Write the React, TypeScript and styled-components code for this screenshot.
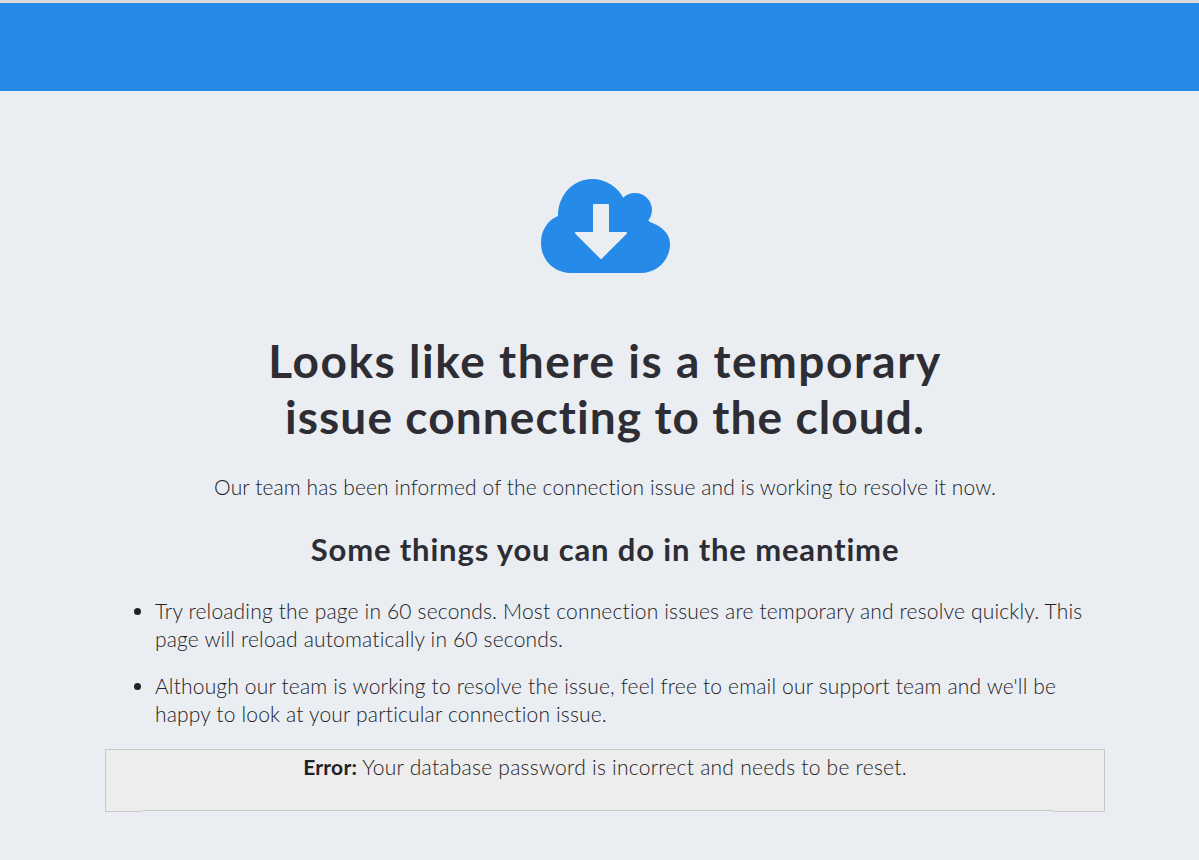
import styled, { createGlobalStyle } from 'styled-components';

const GlobalStyle = createGlobalStyle`
  html, body {
    margin: 0;
    padding: 0;
    background: #eaeef3;
  }
  body {
    font-family: "Lato", "Open Sans", sans-serif;
    color: #2d2d33;
  }
`;

const Page = styled.div`
  height: 860px;
  overflow: hidden;
  display: flex;
  flex-direction: column;
  align-items: center;
`;
const TopBar = styled.header`
  align-self: stretch;
  box-sizing: border-box;
  height: 91px;
  background: #258ae8;
  border-top: 3px solid #dcdcdc;
`;
const Main = styled.main`
  box-sizing: border-box;
  width: 1000px;
  margin-left: 11px;
  padding-top: 88px;
  display: flex;
  flex-direction: column;
  align-items: center;
`;
const CloudIcon = styled.svg`
  display: block;
  width: 130px;
  height: 94px;
  margin-left: 1px;
  fill: #258ae8;
`;
const Title = styled.h1`
  margin: 60px 0 0;
  font-size: 46px;
  line-height: 56px;
  font-weight: 700;
  text-align: center;
`;
const TitleLine = styled.span<{ $spacing: number }>`
  display: block;
  letter-spacing: ${(p) => p.$spacing}px;
`;
const Lead = styled.p`
  margin: 28px 0 0;
  font-size: 21px;
  line-height: 28px;
  font-weight: 300;
  color: #222226;
  letter-spacing: 0.1px;
  text-align: center;
`;
const SubTitle = styled.h2`
  margin: 30px 0 0;
  font-size: 31px;
  line-height: 36px;
  font-weight: 700;
  letter-spacing: 0.84px;
  text-align: center;
`;
const Tips = styled.ul`
  align-self: stretch;
  margin: 30px 0 0;
  padding: 0 0 0 50px;
  list-style: disc;
`;
const Tip = styled.li`
  font-size: 21px;
  line-height: 28px;
  font-weight: 300;
  color: #222226;
  letter-spacing: 0.17px;
  margin-bottom: 19px;
`;
const ErrorBox = styled.div`
  position: relative;
  box-sizing: border-box;
  align-self: stretch;
  height: 63px;
  margin-top: 2px;
  padding-top: 3px;
  background: #ededed;
  border: 1px solid #c9c9c9;
  font-size: 21px;
  line-height: 28px;
  font-weight: 300;
  color: #222226;
  letter-spacing: 0.25px;
  text-align: center;

  &::after {
    content: '';
    position: absolute;
    left: 36px;
    right: 51px;
    bottom: -1px;
    height: 1px;
    background: #eaeef3;
    box-shadow: 0 -1px 0 #c9c9c9;
  }

  b {
    font-weight: 700;
  }
`;

export default function App() {
  return (
    <Page>
      <GlobalStyle />
      <TopBar />
      <Main>
        <CloudIcon viewBox="0 0 130 94" aria-hidden="true">
          <path d="M30 94C13 94 0 81 0 64 0 51 7 41 17 37 17 15 33 0 51 0 65 0 77 8 83 20L109 43C120 47 129 54 129 65 129 81 116 94 100 94Z" />
          <circle cx="94" cy="31" r="17" />
          <path
            fill="#eaeef3"
            stroke="#eaeef3"
            strokeWidth="2"
            strokeLinejoin="round"
            d="M53 26H67V54H85L60 79 35 54H53Z"
          />
        </CloudIcon>
        <Title>
          <TitleLine $spacing={1.55}>Looks like there is a temporary</TitleLine>
          <TitleLine $spacing={1.1}>issue connecting to the cloud.</TitleLine>
        </Title>
        <Lead>Our team has been informed of the connection issue and is working to resolve it now.</Lead>
        <SubTitle>Some things you can do in the meantime</SubTitle>
        <Tips>
          <Tip>
            Try reloading the page in 60 seconds. Most connection issues are temporary and resolve quickly. This page
            will reload automatically in 60 seconds.
          </Tip>
          <Tip>
            Although our team is working to resolve the issue, feel free to email our support team and we'll be happy
            to look at your particular connection issue.
          </Tip>
        </Tips>
        <ErrorBox>
          <b>Error:</b> Your database password is incorrect and needs to be reset.
        </ErrorBox>
      </Main>
    </Page>
  );
}
